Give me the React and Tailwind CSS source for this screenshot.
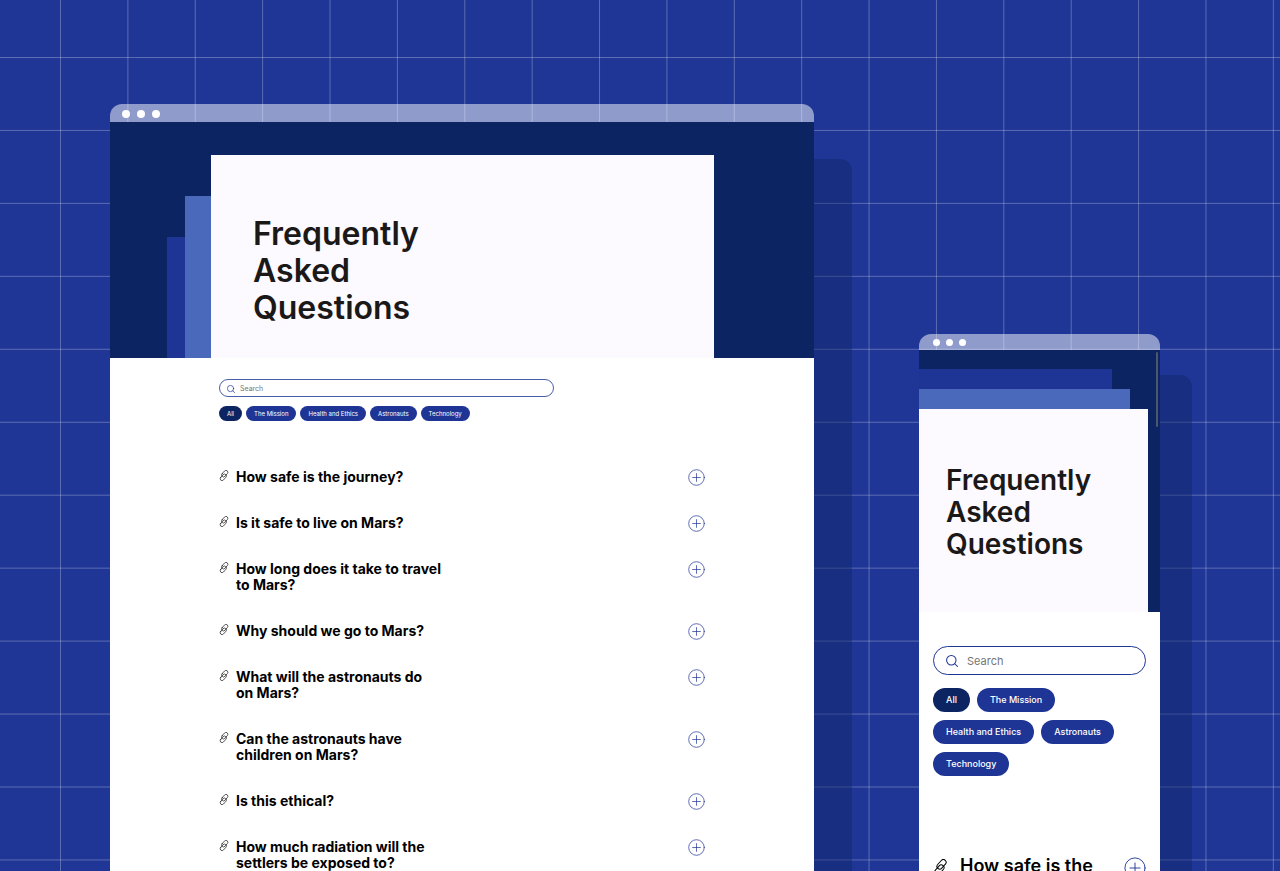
const CATEGORIES = ['All', 'The Mission', 'Health and Ethics', 'Astronauts', 'Technology'];

const QUESTIONS = [
  'How safe is the journey?',
  'Is it safe to live on Mars?',
  'How long does it take to travel\nto Mars?',
  'Why should we go to Mars?',
  'What will the astronauts do\non Mars?',
  'Can the astronauts have\nchildren on Mars?',
  'Is this ethical?',
  'How much radiation will the\nsettlers be exposed to?',
];

function GridBackdrop() {
  return (
    <svg className="absolute inset-0 h-full w-full" aria-hidden="true">
      <g stroke="#ffffff" strokeOpacity="0.27" strokeWidth="1">
        {Array.from({ length: 40 }, (_, i) => (
          <line key={'v' + i} x1={60.5 + i * 67.38} x2={60.5 + i * 67.38} y1="0" y2="100%" />
        ))}
        {Array.from({ length: 30 }, (_, i) => (
          <line key={'h' + i} y1={57.5 + i * 72.95} y2={57.5 + i * 72.95} x1="0" x2="100%" />
        ))}
      </g>
    </svg>
  );
}

function LinkIcon({ className }) {
  return (
    <svg viewBox="0 0 20 22" className={className} fill="none" stroke="currentColor" strokeWidth="1.4" strokeLinecap="round" aria-hidden="true">
      <g transform="rotate(-48 10 11)">
        <rect x="6.2" y="5.8" width="15" height="7.6" rx="3.8" />
        <rect x="-1.2" y="8.6" width="15" height="7.6" rx="3.8" />
      </g>
    </svg>
  );
}

function PlusIcon({ className }) {
  return (
    <svg viewBox="0 0 24 24" className={className} fill="none" stroke="currentColor" strokeLinecap="round" aria-hidden="true">
      <circle cx="12" cy="12" r="11" />
      <path d="M12 6.5v11M6.5 12h11" />
    </svg>
  );
}

function SearchIcon({ className }) {
  return (
    <svg viewBox="0 0 14 14" className={className} fill="none" stroke="currentColor" strokeWidth="1.2" strokeLinecap="round" aria-hidden="true">
      <circle cx="6.2" cy="6.2" r="5.5" />
      <path d="M10.2 10.2l3.2 3.2" />
    </svg>
  );
}

function Dots({ className }) {
  return (
    <>
      {[0, 1, 2].map((i) => (
        <span key={i} className={className} />
      ))}
    </>
  );
}

function DesktopWindow() {
  return (
    <div className="relative flex w-[67%] flex-col">
      <div className="absolute top-[55px] -right-[38px] bottom-0 w-24 rounded-tr-xl bg-[#0c2461]/40" />
      <div className="relative flex h-[18px] shrink-0 items-center gap-[7px] rounded-t-xl bg-white/50 px-3 pt-px">
        <Dots className="size-2 rounded-full bg-white" />
      </div>
      <div className="relative flex grow flex-col bg-white">
        <header className="flex items-end bg-[#0c2461] pt-[33px] pr-[100px] pl-[57px]">
          <div className="h-[121px] w-[18px] bg-[#1f3596]" />
          <div className="h-[162px] w-[26px] bg-[#4a69bb]" />
          <div className="grow bg-[#fcfaff] pt-[60px] pb-[32px] pl-[42px]">
            <h1 className="w-[200px] text-[32px] leading-[37px] font-semibold text-[#1b1818]">Frequently Asked Questions</h1>
          </div>
        </header>
        <main className="pt-[21px] pr-[109px] pl-[109px]">
          <label className="flex h-[18px] w-[335px] items-center gap-[5px] rounded-full border border-[#4a5dab] px-[7px] pt-px text-[#1f3596]">
            <SearchIcon className="size-2 shrink-0" />
            <input type="search" aria-label="Search questions" placeholder="Search" className="w-full bg-transparent text-[7px] leading-[10px] outline-none placeholder:text-[#757575]" />
          </label>
          <div className="mt-[9px] flex gap-1">
            {CATEGORIES.map((c, i) => (
              <button key={c} type="button" className={'h-[15px] rounded-full px-[8px] text-[6px] leading-[15px] text-white ' + (i === 0 ? 'bg-[#0c2461]' : 'bg-[#1f3596]')}>
                {c}
              </button>
            ))}
          </div>
          <ul className="mt-12 flex flex-col gap-[30px]">
            {QUESTIONS.map((q) => (
              <li key={q} className="flex items-start">
                <a href="#link" aria-label={'Link to ' + q} className="mt-px mr-[7px] shrink-0 text-[#222222]">
                  <LinkIcon className="h-[11px] w-[10px]" />
                </a>
                <h2 className="text-[14px] leading-4 font-bold whitespace-pre-line text-black">{q}</h2>
                <button type="button" aria-label={'Show answer to ' + q} className="ml-auto -mb-px shrink-0 text-[#1f3596]">
                  <PlusIcon className="size-[17px]" />
                </button>
              </li>
            ))}
          </ul>
        </main>
      </div>
    </div>
  );
}

function PhoneWindow() {
  return (
    <div className="relative mt-[230px] flex w-[241px] shrink-0 flex-col">
      <div className="absolute top-[41px] -right-8 bottom-0 w-24 rounded-tr-xl bg-[#0c2461]/40" />
      <div className="relative flex h-4 shrink-0 items-center gap-[6px] rounded-t-xl bg-white/50 px-[14px] pt-px">
        <Dots className="size-[7px] rounded-full bg-white" />
      </div>
      <div className="relative flex grow flex-col bg-white">
        <header className="bg-[#0c2461] pt-[19px] pr-3">
          <div className="mr-9 h-5 bg-[#1f3596]" />
          <div className="mr-[18px] h-5 bg-[#4a69bb]" />
          <div className="bg-[#fcfaff] pt-[55px] pb-[52px] pl-[27px]">
            <h1 className="w-[180px] text-[28px] leading-8 font-semibold text-[#1b1818]">Frequently Asked Questions</h1>
          </div>
        </header>
        <div className="absolute top-[2px] right-[2px] h-[75px] w-[2px] rounded-full bg-[#4b566f]" />
        <main className="px-[14px] pt-[34px]">
          <label className="flex h-[29px] items-center gap-[9px] rounded-full border border-[#1f3596] px-3 text-[#1f3596]">
            <SearchIcon className="size-3 shrink-0" />
            <input type="search" aria-label="Search questions" placeholder="Search" className="w-full bg-transparent text-[11px] leading-4 outline-none placeholder:text-[#757575]" />
          </label>
          <div className="mt-[13px] flex flex-wrap gap-x-[7px] gap-y-2">
            {CATEGORIES.map((c, i) => (
              <button key={c} type="button" className={'h-6 rounded-full px-[13px] text-[9px] leading-6 font-medium text-white ' + (i === 0 ? 'bg-[#0c2461]' : 'bg-[#1f3596]')}>
                {c}
              </button>
            ))}
          </div>
          <div className="mt-20 flex items-start">
            <a href="#link" aria-label={'Link to ' + QUESTIONS[0]} className="mt-[3px] mr-3 shrink-0 text-black">
              <LinkIcon className="h-4 w-[15px]" />
            </a>
            <h2 className="w-[150px] text-[18px] leading-5 font-semibold text-black">{QUESTIONS[0]}</h2>
            <button type="button" aria-label={'Show answer to ' + QUESTIONS[0]} className="mt-px ml-auto shrink-0 text-[#1f3596]">
              <PlusIcon className="size-[22px]" />
            </button>
          </div>
        </main>
      </div>
    </div>
  );
}

export default function App() {
  return (
    <div className="relative h-screen overflow-hidden bg-[#1f3696] font-[Inter,sans-serif]">
      <GridBackdrop />
      <div className="relative flex min-h-full items-stretch justify-between pt-[104px] pr-[120px] pl-[110px]">
        <DesktopWindow />
        <PhoneWindow />
      </div>
    </div>
  );
}
